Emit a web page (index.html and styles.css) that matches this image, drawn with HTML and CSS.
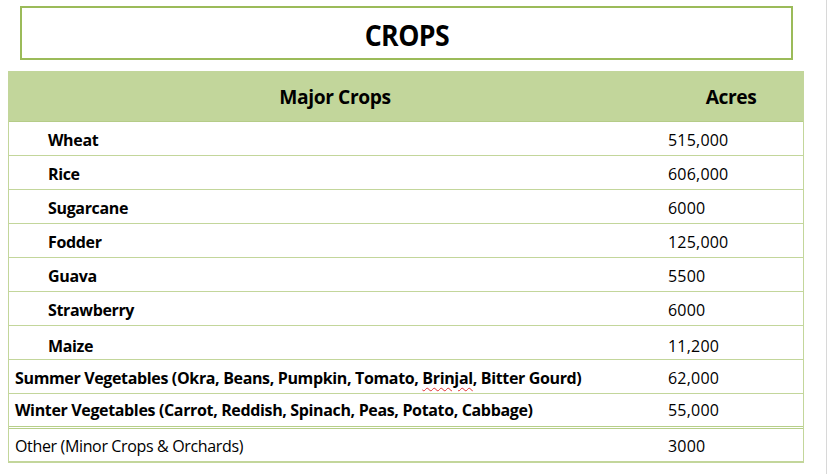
FILE: index.html
```html
<!DOCTYPE html>
<html>
<head>
<meta charset="utf-8">
<link rel="stylesheet" href="styles.css">
</head>
<body>
<div class="page">
  <div class="title-box"><h1 class="title">CROPS</h1></div>
  <div class="table">
    <div class="row head">
      <div class="c1">Major Crops</div>
      <div class="c2">Acres</div>
    </div>
    <div class="row"><div class="c1 b ind">Wheat</div><div class="c2">515,000</div></div>
    <div class="row"><div class="c1 b ind">Rice</div><div class="c2">606,000</div></div>
    <div class="row"><div class="c1 b ind">Sugarcane</div><div class="c2">6000</div></div>
    <div class="row"><div class="c1 b ind">Fodder</div><div class="c2">125,000</div></div>
    <div class="row"><div class="c1 b ind">Guava</div><div class="c2">5500</div></div>
    <div class="row"><div class="c1 b ind">Strawberry</div><div class="c2">6000</div></div>
    <div class="row low"><div class="c1 b ind">Maize</div><div class="c2">11,200</div></div>
    <div class="row"><div class="c1 b">Summer Vegetables (Okra, Beans, Pumpkin, Tomato, <span class="spell">Brinjal</span>, Bitter Gourd)</div><div class="c2">62,000</div></div>
    <div class="row dbl"><div class="c1 b">Winter Vegetables (Carrot, Reddish, Spinach, Peas, Potato, Cabbage)</div><div class="c2">55,000</div></div>
    <div class="row last"><div class="c1">Other (Minor Crops &amp; Orchards)</div><div class="c2">3000</div></div>
  </div>
</div>
</body>
</html>
```
FILE: styles.css
```css
html, body {
  margin: 0;
  padding: 0;
  background: #ffffff;
}
body {
  font-family: "Open Sans", "Lato", sans-serif;
  color: #000;
  width: 827px;
  height: 474px;
  overflow: hidden;
  position: relative;
}
body::after {
  content: "";
  position: absolute;
  right: 0;
  top: 0;
  width: 1px;
  height: 474px;
  background: #d8d8d8;
}
.page {
  padding: 6px 0 0 8px;
  width: 796px;
}
.title-box {
  margin-left: 12px;
  width: 769px;
  height: 50px;
  border: 2px solid #9bbb59;
  display: flex;
  align-items: center;
  justify-content: center;
}
.title {
  margin: 0;
  font-family: "Open Sans", sans-serif;
  font-weight: 700;
  font-size: 29px;
  letter-spacing: -0.6px;
  transform: scaleX(0.92);
  line-height: 1;
  padding-top: 2px;
}
.table {
  margin-top: 11px;
  border: 1px solid #c3d69b;
  border-top: none;
  width: 794px;
}
.row {
  display: grid;
  grid-template-columns: 652px 1fr;
  border-bottom: 1px solid #c3d69b;
  font-size: 16px;
  align-items: end;
  padding-bottom: 4px;
  box-sizing: content-box;
  height: 29px;
}
.row.head {
  background: #c2d69b;
  height: 50px;
  padding-bottom: 0;
  align-items: center;
  font-weight: 700;
  font-size: 20px;
  border-bottom: 1px solid #b5cc88;
}
.row.head .c1, .row.head .c2 {
  text-align: center;
  padding: 0;
  letter-spacing: -0.4px;
  transform: scaleX(0.96);
}
.row.head .c2 { padding-right: 2px; }
.row.low { padding-bottom: 2px; height: 31px; }
.row.dbl { border-bottom: 3px double #b7cf8a; height: 27px; padding-bottom: 5px; }
.row.last { height: 28px; padding-bottom: 4px; }
.c1 {
  padding-left: 6px;
  white-space: nowrap;
  letter-spacing: -0.35px;
}
.c1.ind { padding-left: 39px; }
.b { font-weight: 700; }
.c2 {
  padding-left: 7px;
  letter-spacing: 0.2px;
}
.spell {
  text-decoration: underline wavy #e03030;
  text-decoration-thickness: 1px;
  text-underline-offset: 3px;
}
```
